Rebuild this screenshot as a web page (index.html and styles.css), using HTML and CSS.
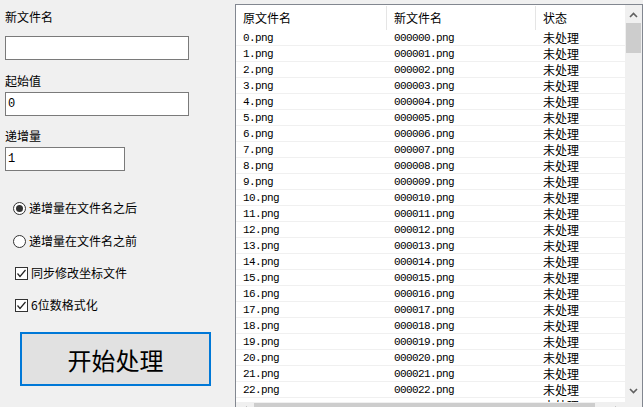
FILE: index.html
```html
<!DOCTYPE html>
<html>
<head>
<meta charset="utf-8">
<link rel="stylesheet" href="styles.css">
</head>
<body>
<div class="app">
  <div class="panel">
    <div class="label l1">新文件名</div>
    <div class="textbox tb1"></div>
    <div class="label l2">起始值</div>
    <div class="textbox tb2">0</div>
    <div class="label l3">递增量</div>
    <div class="textbox tb3 short">1</div>

    <div class="opt radio r1"><span class="circle on"></span><span>递增量在文件名之后</span></div>
    <div class="opt radio r2"><span class="circle"></span><span>递增量在文件名之前</span></div>
    <div class="opt check c1"><span class="box"><svg width="11" height="11" viewBox="0 0 11 11"><polyline points="1.5,5.5 4,8.5 9.5,2" fill="none" stroke="#222" stroke-width="1.2"/></svg></span><span>同步修改坐标文件</span></div>
    <div class="opt check c2"><span class="box"><svg width="11" height="11" viewBox="0 0 11 11"><polyline points="1.5,5.5 4,8.5 9.5,2" fill="none" stroke="#222" stroke-width="1.2"/></svg></span><span>6位数格式化</span></div>

    <div class="button">开始处理</div>
  </div>

  <div class="listview">
    <div class="viewport">
      <div class="header">
        <div class="hcell">原文件名</div>
        <div class="hcell">新文件名</div>
        <div class="hcell last">状态</div>
      </div>
      <div class="rows" id="rows"></div>
    </div>
    <div class="vscroll">
      <svg class="arrow" width="9" height="6" viewBox="0 0 9 6"><polyline points="1,5 4.5,1.5 8,5" fill="none" stroke="#606060" stroke-width="1.6"/></svg>
      <div class="vthumb"></div>
      <div class="vspace"></div>
      <svg class="arrow" width="9" height="6" viewBox="0 0 9 6"><polyline points="1,1 4.5,4.5 8,1" fill="none" stroke="#606060" stroke-width="1.6"/></svg>
    </div>
    <div class="hscroll">
      <svg class="harrow" width="6" height="9" viewBox="0 0 6 9"><polyline points="5,1 1.5,4.5 5,8" fill="none" stroke="#606060" stroke-width="1.6"/></svg>
      <div class="hthumb"></div>
      <div class="hspace"></div>
      <svg class="harrow" width="6" height="9" viewBox="0 0 6 9"><polyline points="1,1 4.5,4.5 1,8" fill="none" stroke="#606060" stroke-width="1.6"/></svg>
    </div>
    <div class="corner"></div>
  </div>
</div>
<script>
  var rows = document.getElementById('rows');
  var html = '';
  for (var i = 0; i < 25; i++) {
    var n = ('000000' + i).slice(-6);
    html += '<div class="row"><div class="cell mono">' + i + '.png</div><div class="cell mono">' + n + '.png</div><div class="cell">未处理</div></div>';
  }
  rows.innerHTML = html;
</script>
</body>
</html>
```
FILE: styles.css
```css
html, body {
  margin: 0;
  padding: 0;
  background: #f0f0f0;
  overflow: hidden;
  width: 643px;
  height: 407px;
}
body {
  font-family: "Noto Sans CJK SC", "Noto Sans", sans-serif;
  font-size: 12px;
  color: #000;
}
.app {
  display: flex;
  align-items: flex-start;
}
.panel {
  width: 232px;
  padding-left: 5px;
  display: flex;
  flex-direction: column;
  align-items: flex-start;
}
.label {
  height: 16px;
  line-height: 16px;
}
.l1 { margin-top: 9px; }
.l2 { margin-top: 13px; }
.l3 { margin-top: 12px; }
.textbox {
  box-sizing: border-box;
  width: 184px;
  height: 24px;
  border: 1px solid #7a7a7a;
  background: #fff;
  line-height: 22px;
  padding-left: 2px;
  font-family: "Liberation Mono", monospace;
  font-size: 12px;
}
.tb1 { margin-top: 11px; }
.tb2 { margin-top: 3px; }
.tb3 { margin-top: 3px; }
.short { width: 120px; }

.opt {
  height: 16px;
  display: flex;
  align-items: center;
  line-height: 16px;
}
.radio { margin-left: 8px; gap: 3px; }
.check { margin-left: 10px; gap: 3px; }
.r1 { margin-top: 29px; }
.r2 { margin-top: 17px; }
.c1 { margin-top: 16px; }
.c2 { margin-top: 16px; }
.circle {
  box-sizing: border-box;
  width: 13px;
  height: 13px;
  border: 1px solid #333;
  border-radius: 50%;
  background: #fff;
  display: flex;
  align-items: center;
  justify-content: center;
}
.circle.on::after {
  content: "";
  width: 7px;
  height: 7px;
  border-radius: 50%;
  background: #333;
}
.box {
  box-sizing: border-box;
  width: 13px;
  height: 13px;
  border: 1px solid #333;
  background: #fff;
  display: flex;
}
.box svg { display: block; }

.button {
  box-sizing: border-box;
  margin-top: 19px;
  margin-left: 15px;
  width: 191px;
  height: 54px;
  border: 2px solid #0078d7;
  background: #e1e1e1;
  display: flex;
  align-items: center;
  justify-content: center;
  font-size: 24px;
}

.listview {
  margin-top: 4px;
  box-sizing: border-box;
  width: 408px;
  height: 416px;
  border: 1px solid #828790;
  background: #fff;
  display: grid;
  grid-template-columns: 389px 17px;
  grid-template-rows: 397px 17px;
  flex-shrink: 0;
}
.viewport {
  overflow: hidden;
  background: #fff;
}
.header {
  display: grid;
  grid-template-columns: 151px 149px 89px;
  height: 25px;
}
.hcell {
  box-sizing: border-box;
  padding-left: 7px;
  line-height: 24px;
  border-right: 1px solid #e5e5e5;
  margin-top: 1px;
  height: 24px;
}
.hcell.last { border-right: none; }
.row {
  display: grid;
  grid-template-columns: 151px 149px 89px;
  height: 16px;
  box-sizing: border-box;
  border-bottom: 1px solid #f0f0f0;
}
.cell {
  padding-left: 7px;
  line-height: 15px;
  white-space: nowrap;
  overflow: hidden;
}
.mono {
  font-family: "Liberation Mono", monospace;
  font-size: 11px;
  line-height: 17px;
  letter-spacing: -0.6px;
}

.vscroll {
  background: #f0f0f0;
  display: flex;
  flex-direction: column;
  align-items: center;
}
.vscroll .arrow { margin: 7px 0 5px; flex-shrink: 0; }
.vscroll .arrow:last-child { margin: 4px 0 8px; }
.vthumb {
  width: 15px;
  height: 30px;
  background: #cdcdcd;
  flex-shrink: 0;
}
.vspace { flex: 1; }

.hscroll {
  background: #f0f0f0;
  display: flex;
  align-items: center;
}
.harrow { margin: 0 5px 0 6px; flex-shrink: 0; }
.hthumb {
  width: 341px;
  height: 15px;
  background: #cdcdcd;
  flex-shrink: 0;
  margin-left: 1px;
}
.hspace { flex: 1; }
.corner { background: #f0f0f0; }
```
